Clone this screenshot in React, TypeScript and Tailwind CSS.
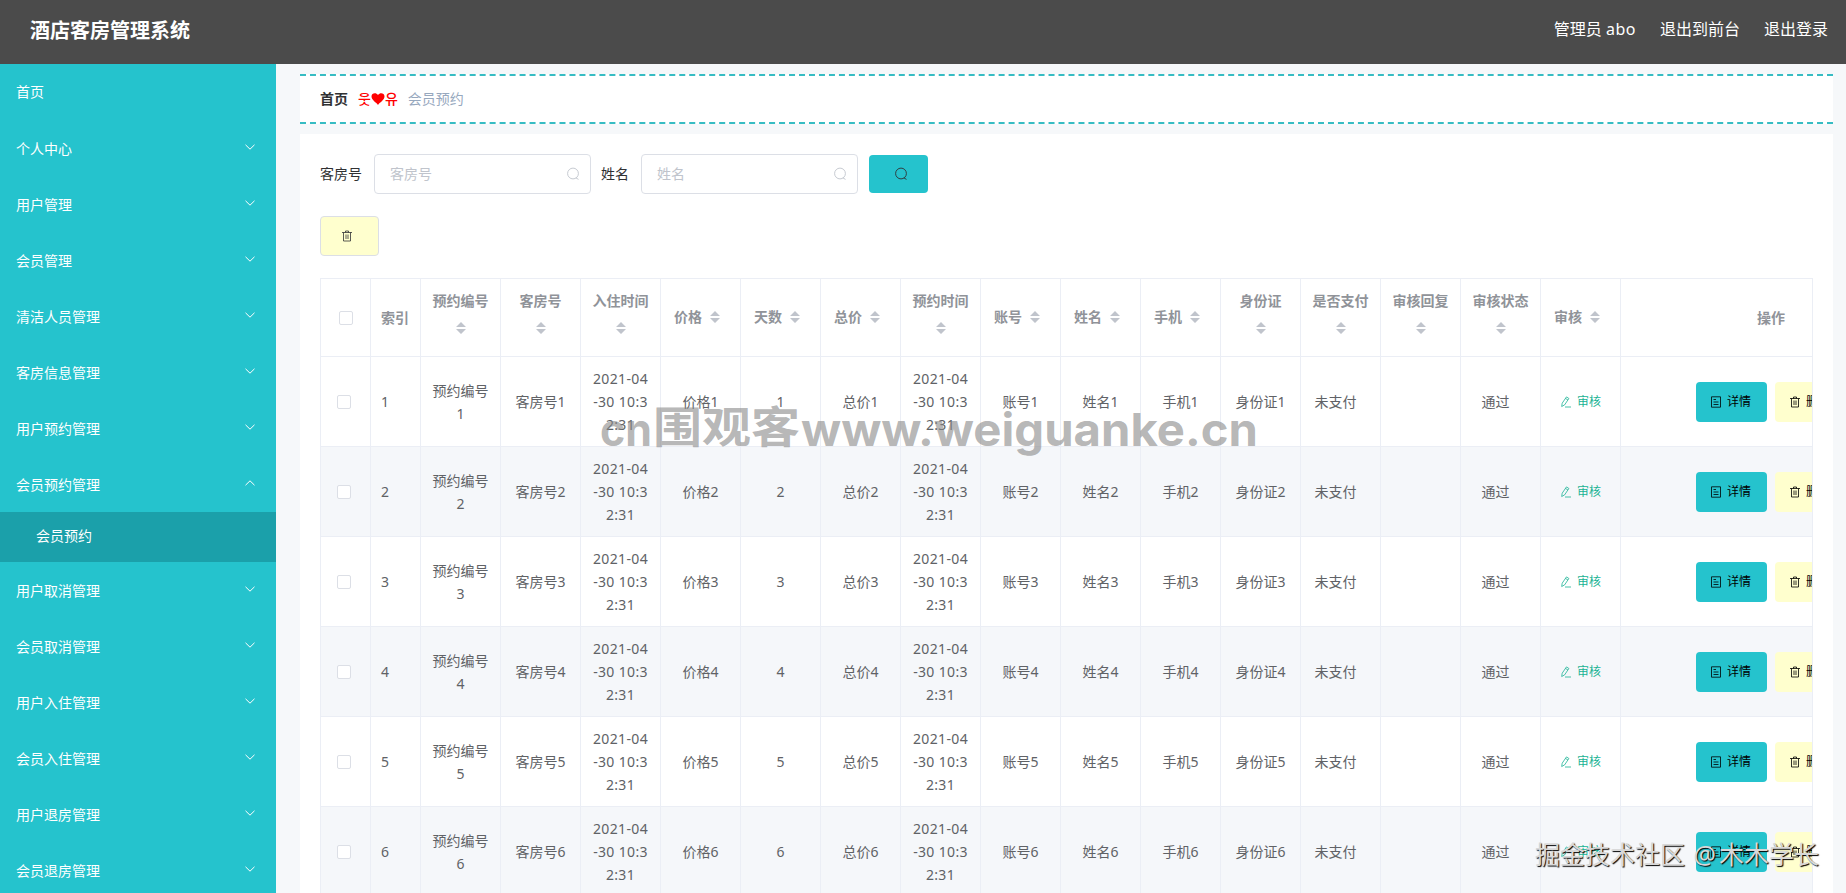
import { useState } from "react";

const menus = [
  { name: "首页" },
  { name: "个人中心", children: ["修改密码", "个人信息"] },
  { name: "用户管理", children: ["用户"] },
  { name: "会员管理", children: ["会员"] },
  { name: "清洁人员管理", children: ["清洁人员"] },
  { name: "客房信息管理", children: ["客房信息"] },
  { name: "用户预约管理", children: ["用户预约"] },
  { name: "会员预约管理", children: ["会员预约"] },
  { name: "用户取消管理", children: ["用户取消"] },
  { name: "会员取消管理", children: ["会员取消"] },
  { name: "用户入住管理", children: ["用户入住"] },
  { name: "会员入住管理", children: ["会员入住"] },
  { name: "用户退房管理", children: ["用户退房"] },
  { name: "会员退房管理", children: ["会员退房"] }
];

const columns = [
  "预约编号",
  "客房号",
  "入住时间",
  "价格",
  "天数",
  "总价",
  "预约时间",
  "账号",
  "姓名",
  "手机",
  "身份证",
  "是否支付",
  "审核回复",
  "审核状态",
  "审核"
];

const rows = [1, 2, 3, 4, 5, 6];

function ArrowIcon({ up }: { up?: boolean }) {
  return (
    <svg
      viewBox="0 0 12 12"
      className={`w-3 h-3 ${up ? "rotate-180" : ""}`}
      fill="none"
      stroke="currentColor"
    >
      <path d="M1.5 3.8 6 8.2l4.5-4.4" />
    </svg>
  );
}

function SearchIcon({ className }: { className: string }) {
  return (
    <svg
      viewBox="0 0 14 14"
      className={className}
      fill="none"
      stroke="currentColor"
      strokeWidth="0.9"
    >
      <circle cx="7" cy="6.5" r="5.4" />
      <path d="m9.800 10.800 2.700 1.600" />
    </svg>
  );
}

function TrashIcon() {
  return (
    <svg
      viewBox="0 0 12 12"
      className="w-3 h-3"
      fill="none"
      stroke="currentColor"
      strokeWidth="0.8"
    >
      <path d="M1 2.500h10M2.500 2.500v8.500h7V2.500M4.500 2.500V1h3v1.500M5 4.500v4.500M7 4.500v4.500" />
    </svg>
  );
}

function DocIcon() {
  return (
    <svg
      viewBox="0 0 12 12"
      className="w-3 h-3"
      fill="none"
      stroke="currentColor"
      strokeWidth="0.8"
    >
      <path d="M1.500.8h9v10.400h-9zM3.500 3.500h2.500M3.500 6h5M3.500 8.500h5" />
    </svg>
  );
}

function EditIcon() {
  return (
    <svg
      viewBox="0 0 12 12"
      className="w-3 h-3"
      fill="none"
      stroke="currentColor"
      strokeWidth="0.8"
    >
      <path d="M2.200 7.200 6.500.9 8.900 2.500 4.600 8.900 1.700 10.500zM5.500 2.400l2.400 1.600M5 11h6" />
    </svg>
  );
}

function SortCaret() {
  return (
    <svg viewBox="0 0 10 12" className="w-2.5 h-3" fill="#c0c4cc">
      <path d="M0 5 5 0l5 5zM0 7h10l-5 5z" />
    </svg>
  );
}

function Checkbox() {
  return (
    <span className="block w-3.5 h-3.5 bg-white border border-[#dcdfe6] rounded-xs" />
  );
}

function Sidebar() {
  const [opened, setOpened] = useState("会员预约管理");

  return (
    <aside className="w-[276px] shrink-0 bg-[#25c3cd] text-white text-sm">
      {menus.map((menu) => (
        <div key={menu.name}>
          <div
            onClick={() => setOpened(opened === menu.name ? "" : menu.name)}
            className={`h-14 pl-4 pr-5 flex items-center justify-between cursor-pointer ${menu.children ? "pt-0.5" : ""}`}
          >
            <span>{menu.name}</span>
            {menu.children && (
              <span className="-mt-[5px]">
                <ArrowIcon up={opened === menu.name} />
              </span>
            )}
          </div>
          {opened === menu.name &&
            menu.children?.map((child) => (
              <div
                key={child}
                className="h-[50px] pl-9 pb-0.5 flex items-center bg-[#1ba0aa] cursor-pointer"
              >
                {child}
              </div>
            ))}
        </div>
      ))}
    </aside>
  );
}

function SearchInput({ label }: { label: string }) {
  return (
    <div className="w-[217px] h-10 px-[15px] pr-2.5 flex items-center justify-between border border-[#dcdfe6] rounded-sm text-[#c0c4cc]">
      <span>{label}</span>
      <SearchIcon className="w-3.5 h-3.5" />
    </div>
  );
}

function HeadCell({ name }: { name: string }) {
  // long names push the caret to its own line
  if (name.length > 2) {
    return (
      <div className="w-20 shrink-0 pt-2.5 flex flex-col items-center gap-2.5 border-r border-[#ebeef5]">
        <span className="leading-[23px]">{name}</span>
        <SortCaret />
      </div>
    );
  }
  return (
    <div className="w-20 shrink-0 flex items-center justify-center gap-2 pr-[7px] pb-0.5 border-r border-[#ebeef5]">
      <span>{name}</span>
      <SortCaret />
    </div>
  );
}

function Cell({ lines, className = "" }: { lines: string[]; className?: string }) {
  return (
    <div
      className={`w-20 shrink-0 flex flex-col items-center justify-center leading-[23px] whitespace-pre border-r border-[#ebeef5] ${className}`}
    >
      {lines.map((line) => (
        <span key={line}>{line}</span>
      ))}
    </div>
  );
}

function Row({ no }: { no: number }) {
  const time = ["2021-04", "-30 10:3", "2:31"];

  return (
    <div
      className={`w-[1600px] h-[90px] flex border-b border-[#ebeef5] ${no % 2 === 0 ? "bg-[#f5f7fa]" : "bg-white"}`}
    >
      <div className="w-[50px] shrink-0 pl-4 flex items-center border-r border-[#ebeef5]">
        <Checkbox />
      </div>
      <div className="w-[50px] shrink-0 pl-2.5 flex items-center border-r border-[#ebeef5]">
        {no}
      </div>
      <Cell lines={["预约编号", `${no}`]} />
      <Cell lines={[`客房号${no}`]} />
      <Cell lines={time} className="tracking-[0.35px]" />
      <Cell lines={[`价格${no}`]} />
      <Cell lines={[`${no}`]} />
      <Cell lines={[`总价${no}`]} />
      <Cell lines={time} className="tracking-[0.35px]" />
      <Cell lines={[`账号${no}`]} />
      <Cell lines={[`姓名${no}`]} />
      <Cell lines={[`手机${no}`]} />
      <Cell lines={[`身份证${no}`]} />
      <Cell lines={["未支付"]} className="pr-2.5" />
      <Cell lines={[]} />
      <Cell lines={["通过"]} className="pr-2.5" />
      <div className="w-20 shrink-0 flex items-center justify-center gap-[5px] text-xs text-[#1ab394] border-r border-[#ebeef5]">
        <EditIcon />
        <span>审核</span>
      </div>
      <div className="w-[300px] shrink-0 flex items-center justify-center gap-2 text-xs text-black">
        <button className="w-[71px] h-10 pr-0.5 flex items-center justify-center gap-[5px] bg-[#25c3cd] rounded-sm">
          <DocIcon />
          <span>详情</span>
        </button>
        <button className="w-[71px] h-10 pr-0.5 flex items-center justify-center gap-[5px] bg-[#ffffce] rounded-sm">
          <TrashIcon />
          <span>删除</span>
        </button>
      </div>
    </div>
  );
}

function Table() {
  return (
    <div className="mt-[22px] w-[1493px] overflow-hidden text-sm text-[#606266] border border-[#ebeef5]">
      <div className="w-[1600px] h-[78px] flex font-bold text-[#909399] border-b border-[#ebeef5]">
        <div className="w-[50px] shrink-0 pl-[18px] flex items-center border-r border-[#ebeef5]">
          <Checkbox />
        </div>
        <div className="w-[50px] shrink-0 pl-2.5 flex items-center border-r border-[#ebeef5]">
          索引
        </div>
        {columns.map((name) => (
          <HeadCell key={name} name={name} />
        ))}
        <div className="w-[300px] shrink-0 flex items-center justify-center">操作</div>
      </div>
      {rows.map((no) => (
        <Row key={no} no={no} />
      ))}
    </div>
  );
}

function App() {
  return (
    <div className="relative h-[893px] overflow-hidden flex flex-col bg-[#f6f8fa] font-['Noto_Sans','Noto_Sans_CJK_SC',sans-serif]">
      <header className="h-16 shrink-0 pl-[30px] pr-[18px] pb-1.5 flex items-center justify-between bg-[#4b4b4b] text-white">
        <h1 className="pt-1 text-xl font-bold">酒店客房管理系统</h1>
        <div className="flex gap-6 text-base">
          <span>
            管理员 <span className="tracking-[0.5px]">abo</span>
          </span>
          <span>退出到前台</span>
          <span>退出登录</span>
        </div>
      </header>

      <div className="flex flex-1 min-h-0">
        <Sidebar />
        <main className="flex-1 min-w-0 pt-2.5 pl-6 pr-[13px] text-sm">
          <div className="h-[50px] pl-5 flex items-center gap-2.5 bg-white border-y-2 border-dashed border-[#37bcc3]">
            <span className="font-bold text-[#303133]">首页</span>
            <span className="flex text-[#ff0000] font-['Noto_Sans_CJK_KR',sans-serif] font-medium">
              <span className="-mt-px">웃</span>
              <svg viewBox="0 0 14 14" className="w-3.5 h-5" fill="currentColor">
                <path d="M7 13C5.500 10.500.5 8 .5 4.500.5 1 5 .2 7 3c2-2.800 6.500-2 6.500 1.500C13.500 8 8.500 10.500 7 13z" />
              </svg>
              <span className="-mt-px">유</span>
            </span>
            <span className="text-[#97a8be]">会员预约</span>
          </div>

          <div className="mt-2.5 h-[800px] p-5 bg-white">
            <div className="flex items-center text-[#303133]">
              <span className="mr-3">客房号</span>
              <SearchInput label="客房号" />
              <span className="ml-2.5 mr-3">姓名</span>
              <SearchInput label="姓名" />
              <button className="ml-[11px] -mt-px w-[59px] h-[38px] pl-1 flex items-center justify-center bg-[#25c3cd] rounded-sm">
                <SearchIcon className="w-3.5 h-3.5" />
              </button>
            </div>
            <button className="mt-[22px] w-[59px] h-10 pr-1.5 pb-px flex items-center justify-center bg-[#ffffce] border border-[#dcdfe6] rounded-sm text-[#303133]">
              <TrashIcon />
            </button>
            <Table />
          </div>
        </main>
      </div>

      <svg
        viewBox="0 0 670 70"
        className="absolute left-[596px] top-[395px] w-[670px] h-[70px] pointer-events-none font-['Inter','Noto_Sans_CJK_SC',sans-serif] font-bold"
        fill="#888888"
        fillOpacity="0.62"
        fontSize="45"
      >
        <text x="4" y="51" textLength="52" lengthAdjust="spacingAndGlyphs">cn</text>
        <text x="57" y="48" fontSize="43" textLength="147" lengthAdjust="spacingAndGlyphs">围观客</text>
        <text x="205" y="51" textLength="457" lengthAdjust="spacingAndGlyphs">www.weiguanke.cn</text>
      </svg>

      <div className="absolute left-[1535px] top-[836px] text-[25px] leading-9 whitespace-nowrap [word-spacing:2px] text-[#d8d8d8] [text-shadow:1px_1px_1px_#000] pointer-events-none">
        掘金技术社区 <span className="mr-[3px]">@</span>木木学长
      </div>
    </div>
  );
}

export default App;
